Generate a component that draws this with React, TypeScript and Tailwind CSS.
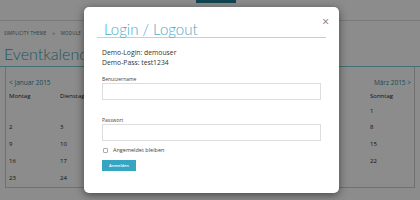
import React from 'react'

const days = ['Montag', 'Dienstag', 'Mittwoch', 'Donnerstag', 'Freitag', 'Samstag', 'Sonntag']

const weeks: (number | null)[][] = [
  [null, null, null, null, null, null, 1],
  [2, 3, 4, 5, 6, 7, 8],
  [9, 10, 11, 12, 13, 14, 15],
  [16, 17, 18, 19, 20, 21, 22],
  [23, 24, 25, 26, 27, 28, null],
]

const rowHeights = ['h-[15px]', 'h-[16px]', 'h-[18px]', 'h-[17px]', 'h-[16px]']

export default function App() {
  return (
    <div className="relative w-[420px] h-[200px] overflow-hidden bg-white font-['Open_Sans',sans-serif] text-[#333]">
      {/* Page behind */}
      <div className="h-[21px] border-b border-[#ddd] flex">
        <div className="ml-[196px] w-[40px] h-[3px] bg-[#1e7f93]" />
      </div>
      <div className="px-[4px] pt-[9px] h-[15px] text-[4.5px] leading-[6px] uppercase tracking-[0.2px] text-[#4a6f78] flex gap-[6px]">
        <span>Simplicity Theme</span>
        <span>»</span>
        <span>Module</span>
        <span>»</span>
        <span>Eventkalender</span>
      </div>
      <div className="px-[4px] pt-[8px] h-[31px] border-b border-[#7fcbd8] font-['Lato',sans-serif] font-light text-[16px] leading-[20px] text-[#3b9fb3]">
        Eventkalender
      </div>
      <div className="mx-[5px] border-l border-r border-b border-[#ccc] h-[121px]">
        <div className="flex justify-between px-[3px] pt-[12px] h-[20px] text-[6.5px] leading-[8px] text-[#2b8ea3]">
          <span>&lt; Januar 2015</span>
          <span>März 2015 &gt;</span>
        </div>
        <div className="grid grid-cols-[51px_repeat(5,62px)_1fr] px-[3px] pt-[1px] text-[6px] text-[#222]">
          {days.map((d) => (
            <div key={d} className="h-[16px] flex items-center">{d}</div>
          ))}
          {weeks.map((w, i) =>
            w.map((n, j) => (
              <div key={`${i}-${j}`} className={`${rowHeights[i]} flex items-center`}>
                {n ?? ''}
              </div>
            ))
          )}
        </div>
      </div>

      {/* Overlay */}
      <div className="absolute inset-0 bg-black/45" />

      {/* Modal */}
      <div className="absolute left-[84px] top-[7px] w-[255px] h-[186px] bg-white rounded-[5px] shadow-[0_2px_8px_rgba(0,0,0,0.5)]">
        <div className="relative mx-[13px] mt-[13px] h-[18px] border-b border-[#a6dbe4]">
          <div className="pl-[7px] font-['Lato',sans-serif] font-light text-[15px] leading-[18px] text-[#4aa9c6]">
            Login / Logout
          </div>
          <span className="absolute -right-[3px] -top-[4px] text-[12px] leading-[12px] text-[#777]">×</span>
        </div>
        <div className="px-[18px] pt-[10px]">
          <div className="text-[6.8px] leading-[10px] text-[#333]">Demo-Login: demouser</div>
          <div className="text-[6.8px] leading-[10px] text-[#333]">Demo-Pass: test1234</div>
          <div className="mt-[8px] text-[5px] leading-[6px] text-[#444]">Benutzername</div>
          <div className="mt-[1px] w-[219px] h-[17px] border border-[#ddd]" />
          <div className="mt-[17px] text-[5px] leading-[6px] text-[#444]">Passwort</div>
          <div className="mt-[1px] w-[219px] h-[17px] border border-[#ddd]" />
          <div className="mt-[6px] flex items-center gap-[5px] pl-[1px]">
            <div className="w-[5px] h-[5px] border border-[#aaa] rounded-[1px]" />
            <span className="text-[5.5px] leading-[7px] text-[#444]">Angemeldet bleiben</span>
          </div>
          <div className="mt-[6px] w-[34px] h-[11px] bg-[#36a5c2] flex items-center justify-center text-[4px] font-semibold text-white">
            Anmelden
          </div>
        </div>
      </div>
    </div>
  )
}
